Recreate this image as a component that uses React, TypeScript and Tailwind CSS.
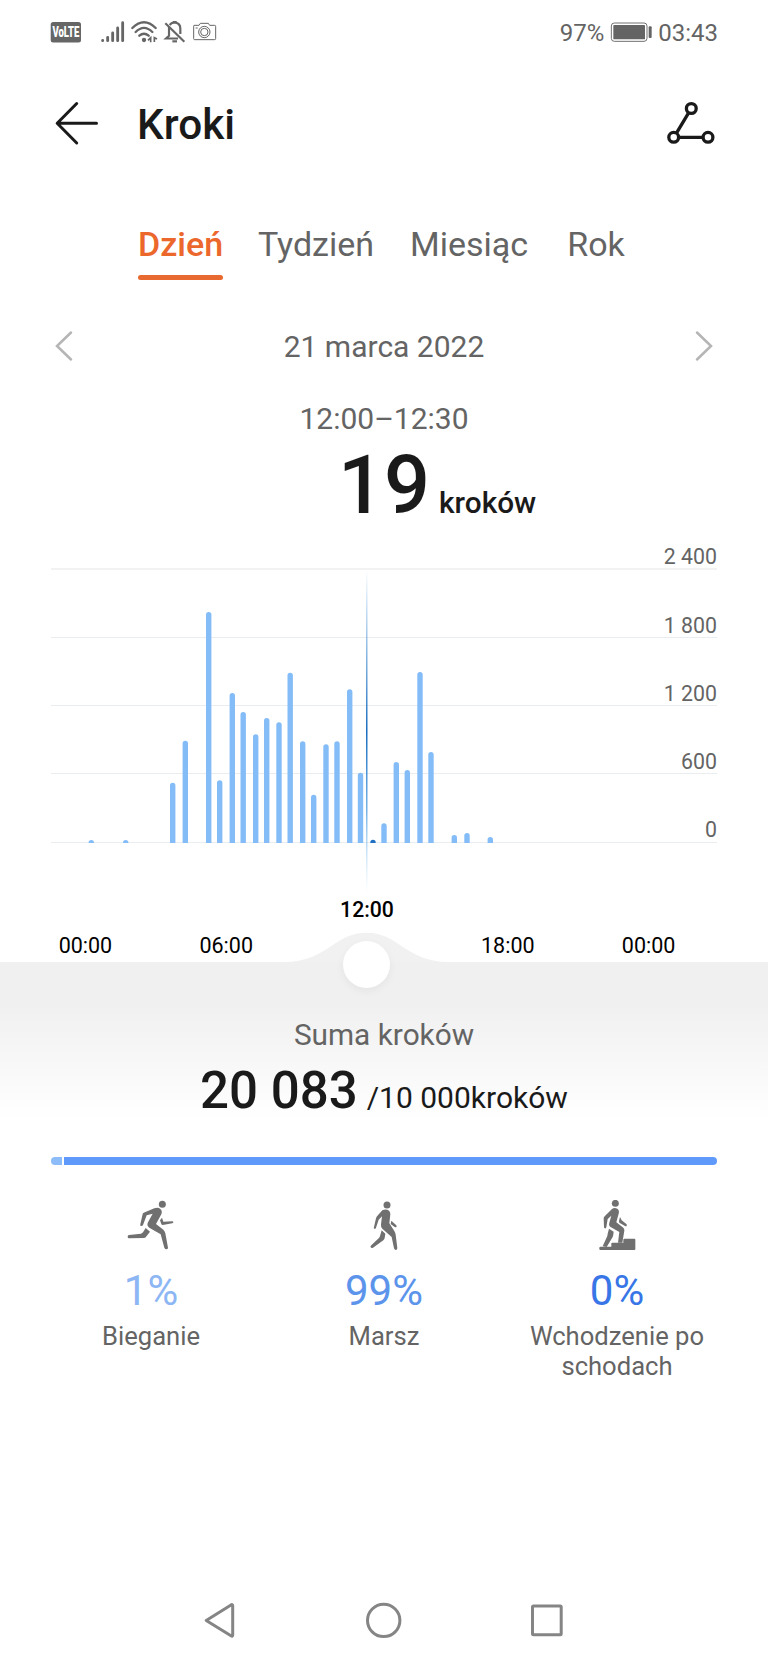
const BARS: [number, number][] = [
  [91.3, 840], [125.7, 840], [172.7, 782.7], [185.3, 740.7], [208.7, 612], [219.7, 780.3],
  [232.3, 693], [243.2, 712], [255.7, 734.3], [266.7, 718], [279, 722.3], [290.2, 672.7],
  [302.7, 741.3], [313.7, 794.7], [326, 744.3], [337, 741.3], [349.7, 689.3], [360.5, 772.7],
  [373, 839.8], [384, 823.3], [396.3, 762], [407.3, 770], [420, 672], [431, 752],
  [454.3, 835], [467, 833], [490.3, 837],
];
const SELECTED = 18;
const BASE = 843;

function barPath(cx: number, top: number) {
  const r = 2.7;
  const ry = Math.min(r, BASE - top);
  return `M${cx - r} ${BASE}V${top + ry}A${r} ${ry} 0 0 1 ${cx + r} ${top + ry}V${BASE}Z`;
}

function StatusBar() {
  return (
    <div className="flex h-[66px] items-center pl-[50px] pr-[50px] text-2xl leading-6 text-[#646464]">
      <svg className="h-6 w-[32px] overflow-visible" viewBox="0 0 32 24">
        <rect x="0.7" y="1" width="30.3" height="20.5" rx="2.5" fill="#666" />
        <text x="2.4" y="16.300" fontSize="14" fontWeight="900" fill="#fff" textLength="27" lengthAdjust="spacingAndGlyphs">VoLTE</text>
      </svg>
      <svg className="ml-[18px] h-6 w-[117px]" viewBox="180 33 351 72" fill="none" stroke="#666">
        <g strokeWidth="8.5" strokeLinecap="round">
          <path d="M188 91v1M203 82v10M218 69v23M233 54v38M248 38v54" />
        </g>
        <g strokeWidth="7" strokeLinecap="round">
          <path d="M277 54Q312 20 347 54M287 66Q312 41 337 66M298 77Q312 65 326 77" />
        </g>
        <circle cx="312" cy="90" r="6.5" fill="#666" stroke="none" />
        <path d="M324 91l8-8v14M351 87l-8-4v13" strokeWidth="5" />
        <g strokeWidth="6.5">
          <path d="M376 40L433 95" />
          <path d="M387 50V77L378 85.500H414M389 45Q394 38 401 38V34H407V38Q421 41 421 56V72" />
          <path d="M397 94H411" />
        </g>
        <g strokeWidth="3">
          <path d="M462 46q-1 0-1 3V86q0 3 3 3H524q3 0 3-3V49q0-3-3-3H509L505 40H481L477 46Z" />
          <circle cx="493" cy="66" r="17" />
          <circle cx="493" cy="66" r="11" />
          <path d="M467 54h6" />
        </g>
      </svg>
      <span className="ml-auto">97%</span>
      <svg className="ml-[6px] mr-[5px] h-6 w-[43px]" viewBox="208 33 129 72">
        <rect x="212" y="39" width="107" height="55" rx="9" fill="none" stroke="#707070" strokeWidth="3" />
        <rect x="218" y="45" width="95" height="43" rx="2" fill="#646464" />
        <rect x="324" y="49" width="9" height="35" rx="3" fill="#646464" />
      </svg>
      <span>03:43</span>
    </div>
  );
}

function Header() {
  return (
    <header className="flex h-[118px] items-center pl-[54px] pr-[51px]">
      <svg className="mb-1 h-[46px] w-[46px]" viewBox="0 0 46 46" fill="none" stroke="#1a1a1a" strokeWidth="3" strokeLinecap="round" strokeLinejoin="round">
        <path d="M42.500 23.300H3.200M22.700 3.500L3.200 23.300L22.700 43" />
      </svg>
      <h1 className="ml-[37px] text-[42.300px] font-medium leading-[50px] text-[#1a1a1a]">Kroki</h1>
      <svg className="mb-1 ml-auto h-[48px] w-[51px]" viewBox="666 99 51 48" fill="none" stroke="#1a1a1a" strokeWidth="3.300">
        <path d="M688.600 112.800L676.600 132.800M679 137.300H703" />
        <circle cx="691.300" cy="108.500" r="4.900" />
        <circle cx="673.700" cy="137.300" r="4.900" />
        <circle cx="708" cy="137.300" r="4.900" />
      </svg>
    </header>
  );
}

function Tabs() {
  return (
    <nav className="flex h-[120px] items-start whitespace-nowrap pl-[138px] pt-10 text-[34px] leading-[41px] text-[#646464]">
      <div className="flex w-[85px] flex-col items-center gap-[10px] font-medium text-[#ec672c]">
        <span>Dzień</span>
        <span className="h-[4.500px] w-full rounded-full bg-[#e86a30]" />
      </div>
      <span className="ml-[33px] w-[120px] text-center">Tydzień</span>
      <span className="ml-[30px] w-[126px] text-center">Miesiąc</span>
      <span className="ml-[34px] w-[60px] text-center">Rok</span>
    </nav>
  );
}

function DatePicker() {
  return (
    <div className="flex h-[85px] items-center justify-between px-[54px] text-[30px] text-[#646464]">
      <svg className="mb-[2px] h-8 w-5" viewBox="0 0 20 32" fill="none" stroke="#b5b5b5" strokeWidth="2.500" strokeLinecap="round">
        <path d="M17 2.500L3 16L17 29.500" />
      </svg>
      <span>21 marca 2022</span>
      <svg className="mb-[2px] h-8 w-5" viewBox="0 0 20 32" fill="none" stroke="#b5b5b5" strokeWidth="2.500" strokeLinecap="round">
        <path d="M3 2.500L17 16L3 29.500" />
      </svg>
    </div>
  );
}

const row = "flex items-end justify-end text-[21.300px] leading-[22px] text-[#646464]";

function Chart() {
  return (
    <section className="relative h-[436px]">
      <div className="px-[51px]">
        <div className={`${row} h-11 border-b-2 border-[#f2f2f2]`}>2 400</div>
        <div className={`${row} h-[68px] border-b border-[#e9edef]`}>1 800</div>
        <div className={`${row} h-[68px] border-b border-[#e9edef]`}>1 200</div>
        <div className={`${row} h-[68px] border-b border-[#e9edef]`}>600</div>
        <div className={`${row} h-[69px] border-b border-[#e9edef] pb-px`}>0</div>
      </div>
      <svg className="absolute left-0 top-0 h-[436px] w-[768px]" viewBox="0 526 768 436">
        <defs>
          <linearGradient id="cursor" x1="0" y1="0" x2="0" y2="1">
            <stop offset="0" stopColor="#2f86d8" stopOpacity="0" />
            <stop offset="0.25" stopColor="#2f7fca" stopOpacity="0.55" />
            <stop offset="0.5" stopColor="#1a6dc0" />
            <stop offset="0.75" stopColor="#3f94dc" stopOpacity="0.7" />
            <stop offset="1" stopColor="#8cc8f0" stopOpacity="0" />
          </linearGradient>
        </defs>
        {BARS.map(([x, top], i) => (
          <path key={x} d={barPath(x, top)} fill={i === SELECTED ? "#1f70c4" : "#84bcf8"} />
        ))}
        <rect x="366" y="570" width="1.500" height="322" fill="url(#cursor)" />
        <path d="M284 962C327 962 334 932.700 366.500 932.700S406 962 449 962Z" fill="#f1f1f1" />
      </svg>
      <div className="ml-[15px] grid w-[704px] grid-cols-5 gap-y-3 pt-[55px] text-center text-[21.500px] leading-6 text-black">
        <span className="col-start-3 text-[21.200px] font-medium">12:00</span>
        <span className="col-start-1">00:00</span>
        <span>06:00</span>
        <span className="col-start-4">18:00</span>
        <span>00:00</span>
      </div>
    </section>
  );
}

function Summary() {
  return (
    <section className="relative flex h-[195px] flex-col items-center bg-[linear-gradient(to_bottom,#f0f0f0_0px,#f0f0f0_40px,#ffffff_158px)] pt-[53px]">
      <div className="absolute left-[343.300px] top-[-21.500px] size-[47px] rounded-full bg-white shadow-[0_3px_8px_rgba(0,0,0,0.05)]" />
      <p className="text-[29.800px] leading-10 text-[#646464]">Suma kroków</p>
      <p className="mt-1.5 flex items-baseline leading-[60px] text-[#1a1a1a]">
        <span className="text-[51px] font-medium">20 083</span>
        <span className="ml-[9px] text-[30px]">/10 000kroków</span>
      </p>
    </section>
  );
}

function RunIcon() {
  return (
    <svg className="size-[50px]" viewBox="48 60 150 150" fill="#707070">
      <circle cx="157" cy="73" r="10.500" />
      <path d="M101 98L133 85Q145 81 151 87Q158 93 154 103L138 132L160 149Q164 153 166 160L174 203Q174 208 169 208Q165 208 163 203L152 163L118 143Q109 137 114 127L128 101L110 106L99 135Q96 140 91 137V133L98 102Q99 99 101 98Z" />
      <path d="M156 113L160 125L187 124Q190 124 190 127Q190 129 187 130L158 135Q155 135 154 132L150 121Z" />
      <path d="M107 144L120 155L107 172Q105 174 102 174L57 175Q53 175 53 170Q53 166 57 165L93 161Q97 160 99 157Z" />
    </svg>
  );
}

function WalkIcon() {
  return (
    <svg className="size-[50px]" viewBox="747 60 150 150" fill="#707070">
      <circle cx="831" cy="75" r="10.500" />
      <path d="M817 91Q824 87 832 89Q841 92 841 103L838 130L853 153Q856 158 857 164L862 204Q862 210 857 210Q854 210 852 205L845 171L817 146Q812 141 813 133L816 109L806 119L798 143Q796 148 792 146Q791 145 792 141L798 115Q799 112 801 109Z" />
      <path d="M844 122L859 136Q861 139 859 141Q857 143 854 141L842 132Z" />
      <path d="M815 151L826 161L824 174Q823 178 820 181L789 203Q785 206 782 202Q780 199 784 196L806 175Q809 172 810 168Z" />
    </svg>
  );
}

function StairsIcon() {
  return (
    <svg className="size-[50px]" viewBox="336 60 150 150" fill="#707070">
      <circle cx="406" cy="70" r="10.500" />
      <path d="M396 87Q403 81 412 86Q419 91 416 101L409 127L430 143Q434 147 433 152L427 188H414L418 156L393 142Q385 137 388 128L394 107L383 117L379 142Q378 146 374 145Q372 144 372 141L371 115Q371 112 374 109Z" />
      <path d="M420 111L425 121L439 132Q442 135 440 137Q438 140 435 138L418 128L417 123Z" />
      <path d="M387 146L401 155L400 163Q400 167 398 171L380 201L368 199L381 170Q383 166 383 161Z" />
      <path d="M362 200H394V190Q394 188 397 188H430V179Q430 176 433 176H463Q466 176 466 179V207Q466 210 463 210H361Q358 210 358 207V203Q358 200 362 200Z" />
    </svg>
  );
}

function Activities() {
  return (
    <section className="mt-[35px] grid w-[699px] grid-cols-3 self-center text-center text-[25.600px] leading-[30px] text-[#646464]">
      <div className="flex flex-col items-center">
        <RunIcon />
        <span className="mt-[17px] text-[42px] leading-[48px] text-[#8db6f4]">1%</span>
        <span className="mt-1.5">Bieganie</span>
      </div>
      <div className="flex flex-col items-center">
        <WalkIcon />
        <span className="mt-[17px] text-[42px] leading-[48px] text-[#5c94ec]">99%</span>
        <span className="mt-1.5">Marsz</span>
      </div>
      <div className="flex flex-col items-center">
        <StairsIcon />
        <span className="mt-[17px] text-[42px] leading-[48px] text-[#3875e6]">0%</span>
        <span className="mt-1.5 w-[190px]">Wchodzenie po schodach</span>
      </div>
    </section>
  );
}

function NavBar() {
  return (
    <footer className="mt-auto flex h-[88px] items-center pl-[200px]">
      <svg className="size-10" viewBox="200 1600 40 40" fill="none" stroke="#858585" strokeWidth="3" strokeLinejoin="round">
        <path d="M206.200 1620.400L231 1604.900Q232.700 1604 232.700 1606V1635Q232.700 1637 231 1635.800Z" />
      </svg>
      <svg className="ml-[124px] size-10" viewBox="364 1600 40 40" fill="none" stroke="#858585" strokeWidth="3">
        <circle cx="383.700" cy="1620.400" r="16.200" />
      </svg>
      <svg className="ml-[123px] size-10" viewBox="527 1600 40 40" fill="none" stroke="#858585" strokeWidth="3">
        <rect x="532.500" y="1606" width="28.700" height="28.700" rx="1" />
      </svg>
    </footer>
  );
}

export default function App() {
  return (
    <main className="flex h-[1664px] w-[768px] flex-col overflow-hidden bg-white font-['Roboto',sans-serif]">
      <StatusBar />
      <Header />
      <Tabs />
      <DatePicker />
      <p className="h-14 text-center text-[30px] leading-[59px] text-[#646464]">12:00–12:30</p>
      <div className="flex h-[81px] items-baseline pl-[338px] font-medium leading-[81px] text-[#1a1a1a]">
        <span className="text-[81px]">19</span>
        <span className="ml-[9px] text-[29.800px]">kroków</span>
      </div>
      <Chart />
      <Summary />
      <div className="mx-[51px] flex h-2 shrink-0 gap-[2.500px]">
        <div className="w-[10.500px] rounded-l-full bg-[#8dbdf9]" />
        <div className="flex-1 rounded-r-full bg-[#5f9afa]" />
      </div>
      <Activities />
      <NavBar />
    </main>
  );
}
